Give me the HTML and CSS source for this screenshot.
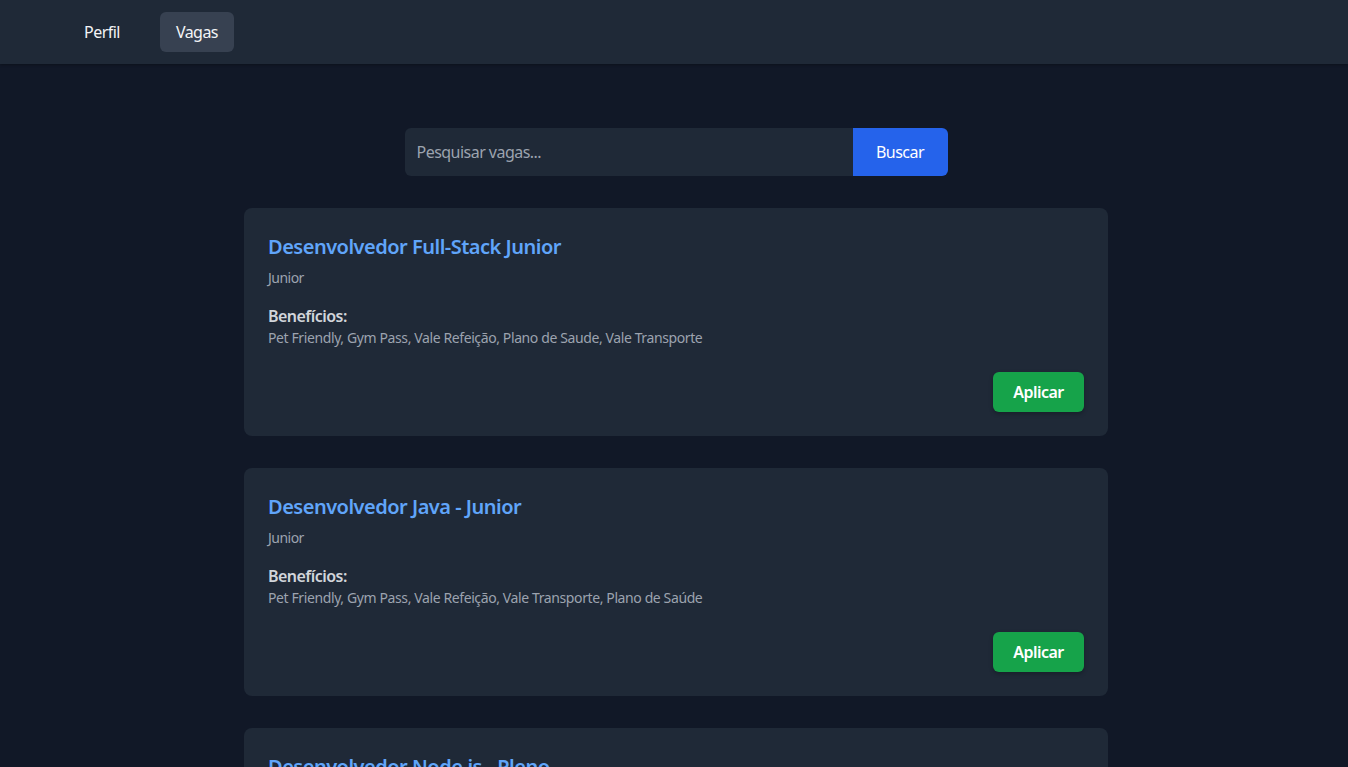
FILE: index.html
```html
<!DOCTYPE html>
<html lang="pt-BR">
<head>
<meta charset="utf-8">
<title>Vagas</title>
<link rel="stylesheet" href="styles.css">
</head>
<body>
<nav class="nav">
  <a class="nav-link" href="#">Perfil</a>
  <a class="nav-link active" href="#">Vagas</a>
</nav>
<main class="main">
  <form class="search">
    <input class="search-input" type="text" placeholder="Pesquisar vagas...">
    <button class="search-btn" type="button">Buscar</button>
  </form>
  <div class="list">
    <div class="card">
      <h2 class="card-title">Desenvolvedor Full-Stack Junior</h2>
      <p class="card-level">Junior</p>
      <p class="card-label">Benefícios:</p>
      <p class="card-benefits">Pet Friendly, Gym Pass, Vale Refeição, Plano de Saude, Vale Transporte</p>
      <div class="card-actions"><button class="apply-btn" type="button">Aplicar</button></div>
    </div>
    <div class="card">
      <h2 class="card-title">Desenvolvedor Java - Junior</h2>
      <p class="card-level">Junior</p>
      <p class="card-label">Benefícios:</p>
      <p class="card-benefits">Pet Friendly, Gym Pass, Vale Refeição, Vale Transporte, Plano de Saúde</p>
      <div class="card-actions"><button class="apply-btn" type="button">Aplicar</button></div>
    </div>
    <div class="card">
      <h2 class="card-title">Desenvolvedor Node.js - Pleno</h2>
      <p class="card-level">Pleno</p>
      <p class="card-label">Benefícios:</p>
      <p class="card-benefits">Pet Friendly, Gym Pass, Vale Refeição, Vale Transporte, Plano de Saúde</p>
      <div class="card-actions"><button class="apply-btn" type="button">Aplicar</button></div>
    </div>
  </div>
</main>
</body>
</html>
```

FILE: styles.css
```css
* { box-sizing: border-box; }
html, body { margin: 0; padding: 0; }
body {
  background: #111827;
  color: #f3f4f6;
  font-family: "Segoe UI", "Noto Sans", sans-serif;
  font-size: 16px;
  line-height: 24px;
  letter-spacing: -0.033em;
}
p, h2 { margin: 0; }
.nav {
  height: 64px;
  background: #1f2937;
  display: flex;
  align-items: center;
  gap: 24px;
  padding-left: 68px;
  box-shadow: 0 1px 3px rgba(0,0,0,0.3);
}
.nav-link {
  color: #f3f4f6;
  text-decoration: none;
  padding: 8px 16px;
  border-radius: 6px;
  font-size: 16px;
  line-height: 24px;
}
.nav-link.active { background: #374151; }
.main {
  padding-top: 64px;
  padding-left: 4px;
  display: flex;
  flex-direction: column;
  align-items: center;
}
.search {
  display: flex;
  margin: 0 0 32px 0;
}
.search-input {
  width: 448px;
  height: 48px;
  background: #1f2937;
  border: none;
  outline: none;
  color: #f3f4f6;
  font-family: inherit;
  font-size: 16px;
  letter-spacing: -0.033em;
  padding: 0 12px;
  border-radius: 6px 0 0 6px;
}
.search-input::placeholder { color: #9ca3af; }
.search-btn {
  height: 48px;
  width: 95px;
  background: #2563eb;
  color: #fff;
  border: none;
  font-family: inherit;
  font-size: 16px;
  letter-spacing: -0.033em;
  border-radius: 0 6px 6px 0;
}
.list {
  width: 864px;
  display: flex;
  flex-direction: column;
  gap: 32px;
}
.card {
  background: #1f2937;
  border-radius: 8px;
  padding: 24px;
}
.card-title {
  color: #60a5fa;
  font-size: 20px;
  line-height: 26px;
  padding-top: 2px;
  font-weight: 600;
  letter-spacing: -0.025em;
}
.card-level {
  margin-top: 8px;
  color: #9ca3af;
  font-size: 14px;
  line-height: 20px;
}
.card-label {
  margin-top: 16px;
  color: #d1d5db;
  font-weight: 600;
}
.card-benefits {
  color: #9ca3af;
  font-size: 14px;
  line-height: 20px;
  letter-spacing: -0.028em;
}
.card-actions {
  margin-top: 24px;
  display: flex;
  justify-content: flex-end;
}
.apply-btn {
  height: 40px;
  width: 91px;
  background: #16a34a;
  color: #fff;
  border: none;
  border-radius: 6px;
  font-family: inherit;
  font-size: 16px;
  font-weight: 600;
  letter-spacing: -0.033em;
  box-shadow: 0 2px 4px rgba(0,0,0,0.25);
}
```
